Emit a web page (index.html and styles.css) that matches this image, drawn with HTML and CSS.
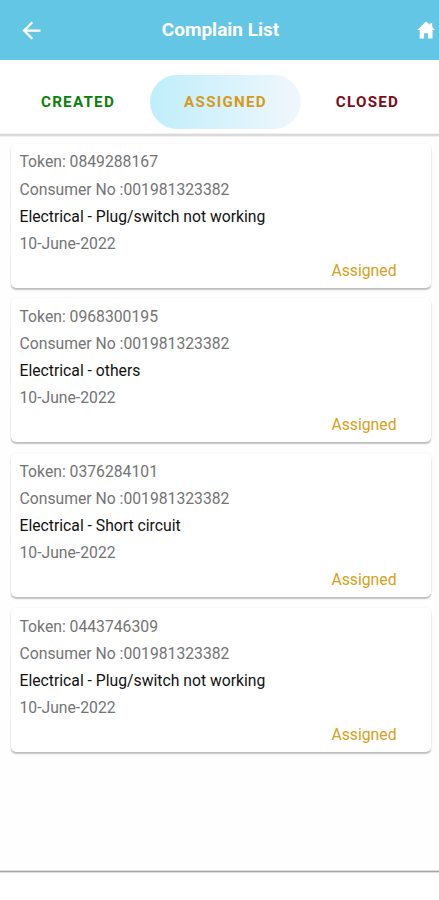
FILE: index.html
```html
<!DOCTYPE html>
<html lang="en">
<head>
<meta charset="utf-8">
<title>Complain List</title>
<link rel="stylesheet" href="styles.css">
</head>
<body>
<header class="bar">
  <svg class="back" viewBox="0 0 24 24"><path d="M20 11H7.83l5.59-5.59L12 4l-8 8 8 8 1.41-1.41L7.83 13H20z"/></svg>
  <h1 class="title">Complain List</h1>
  <svg class="home" viewBox="0 0 18 18"><path d="M9 .4 12.8 3.8V2.2h2.4v3.7L17.8 9H15.5v8.4H10.9v-5.2H7.1v5.2H2.7V9H.2z"/></svg>
</header>
<nav class="tabs">
  <span class="tab created">CREATED</span>
  <span class="tab assigned">ASSIGNED</span>
  <span class="tab closed">CLOSED</span>
</nav>
<main class="list">
  <article class="card">
    <p class="token">Token: 0849288167</p>
    <p>Consumer No :001981323382</p>
    <p class="subject">Electrical - Plug/switch not working</p>
    <p class="date">10-June-2022</p>
    <p class="status">Assigned</p>
  </article>
  <article class="card">
    <p class="token">Token: 0968300195</p>
    <p>Consumer No :001981323382</p>
    <p class="subject">Electrical - others</p>
    <p class="date">10-June-2022</p>
    <p class="status">Assigned</p>
  </article>
  <article class="card">
    <p class="token">Token: 0376284101</p>
    <p>Consumer No :001981323382</p>
    <p class="subject">Electrical - Short circuit</p>
    <p class="date">10-June-2022</p>
    <p class="status">Assigned</p>
  </article>
  <article class="card">
    <p class="token">Token: 0443746309</p>
    <p>Consumer No :001981323382</p>
    <p class="subject">Electrical - Plug/switch not working</p>
    <p class="date">10-June-2022</p>
    <p class="status">Assigned</p>
  </article>
</main>
<footer class="foot"></footer>
</body>
</html>
```
FILE: styles.css
```css
* { box-sizing: border-box; margin: 0; padding: 0; }
body {
  width: 439px;
  height: 900px;
  display: flex;
  flex-direction: column;
  overflow: hidden;
  background: #fefefe;
  font-family: Roboto, "Liberation Sans", sans-serif;
}
.bar {
  flex: none;
  height: 60.4px;
  display: grid;
  grid-template-columns: 60px 1fr 60px;
  align-items: center;
  background: #64c6e5;
  color: #fff;
}
.back { width: 27px; height: 27px; margin-left: 18px; fill: #fff; }
.home { width: 18px; height: 18px; justify-self: end; margin-right: 4px; fill: #fff; }
.title {
  text-align: center;
  font-size: 19px;
  font-weight: 700;
  line-height: 24px;
  padding-left: 2px;
}
.tabs {
  flex: none;
  height: 75.2px;
  padding: 14.2px 0 0 6px;
  display: grid;
  grid-template-columns: 144px 151px 133px;
  border-bottom: 2px solid #dadada;
  box-shadow: 0 1px 0 #f0f0f0, inset 0 -1px 0 #f0f0f0;
  background: #fff;
}
.tab {
  height: 54px;
  line-height: 54px;
  text-align: center;
  font-size: 15.2px;
  font-weight: 700;
  letter-spacing: 1.25px;
}
.created { color: #0c800c; }
.assigned {
  color: #d39b1d;
  border-radius: 27px;
  background: linear-gradient(90deg, #bfeefb, #f1f7fc);
}
.closed { color: #7c0c18; }
.list {
  flex: 1;
  display: flex;
  flex-direction: column;
  gap: 10.7px;
  padding: 8.2px 8px 0 11px;
}
.card {
  height: 144px;
  padding: 4.7px 8.5px 0;
  border-radius: 5px;
  background: #fff;
  box-shadow: 0 2px 1.5px rgba(0, 0, 0, .24), 0 0 2px rgba(0, 0, 0, .08);
  color: #747474;
  font-size: 15.72px;
  line-height: 27.05px;
  white-space: nowrap;
}
.subject { color: #111; }
.status { color: #d6a020; text-align: right; padding-right: 26px; }
.foot {
  flex: none;
  height: 29px;
  border-top: 1px solid #a4a4a4;
  box-shadow: 0 -1px 0 #dcdcdc, inset 0 1px 0 #dcdcdc;
  background: #fff;
}
```
